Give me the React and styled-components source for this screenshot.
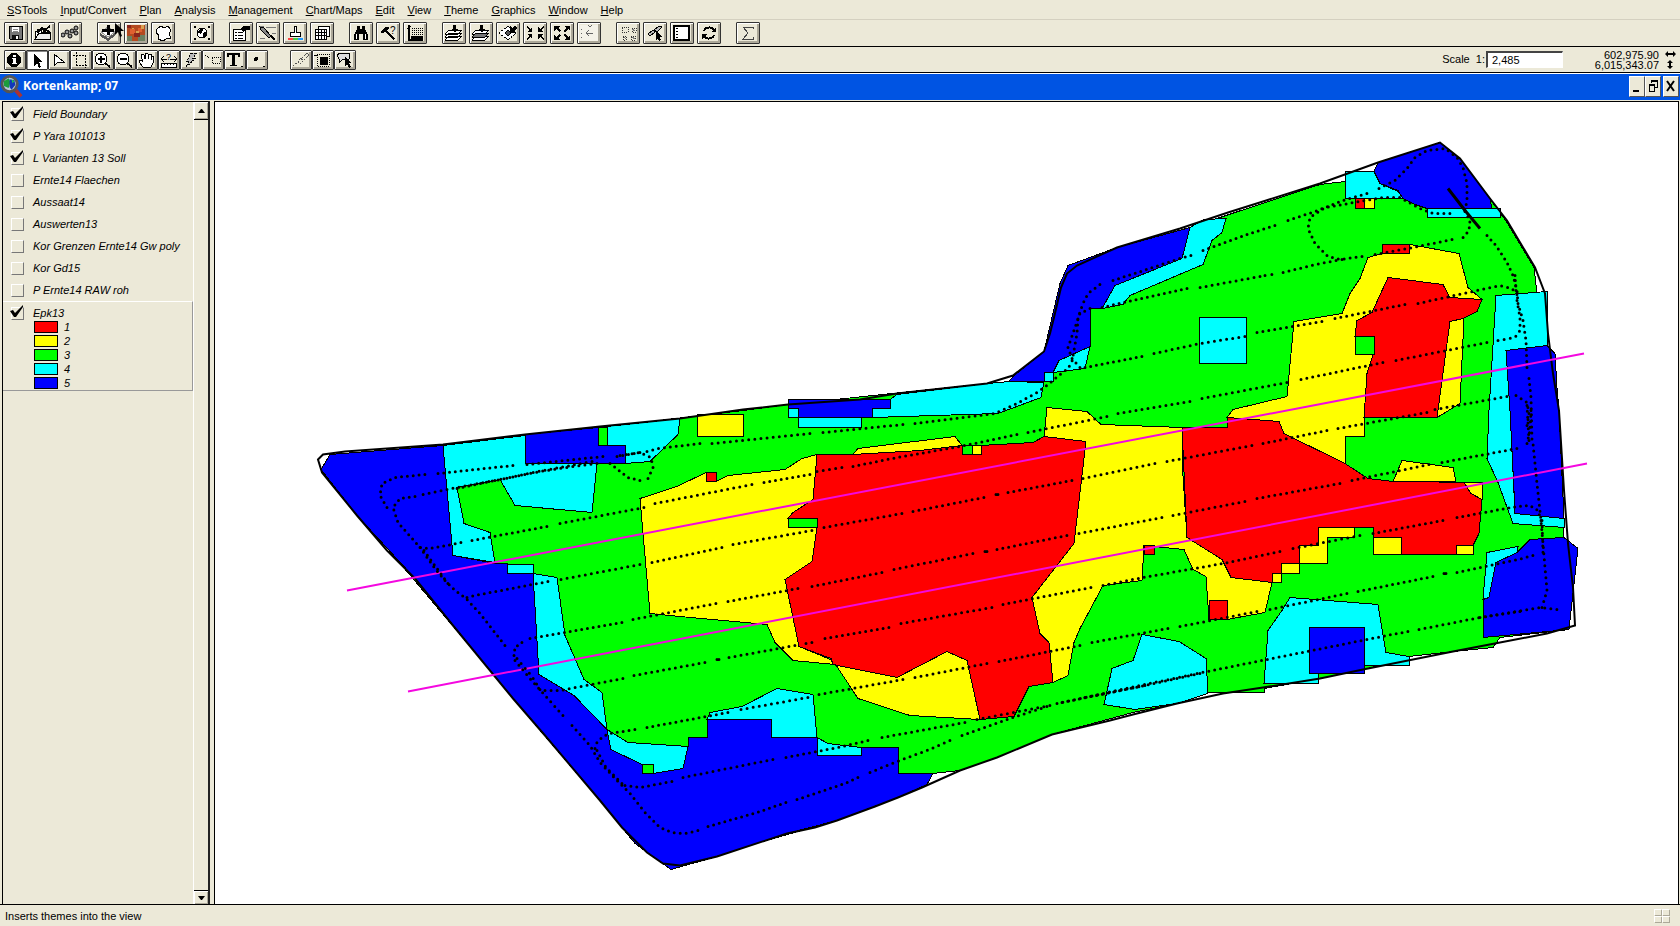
import { useState } from 'react'
import styled, { createGlobalStyle } from 'styled-components'

const colors = {
  face: '#ece9d8',
  shadow: '#aca899',
  title: '#0054e3',
  red: '#ff0000',
  yellow: '#ffff00',
  green: '#00ff00',
  cyan: '#00ffff',
  blue: '#0000ff',
}

const menus = [
  'SSTools',
  'Input/Convert',
  'Plan',
  'Analysis',
  'Management',
  'Chart/Maps',
  'Edit',
  'View',
  'Theme',
  'Graphics',
  'Window',
  'Help',
]

const arrowPath = 'M0 0v12l3-3 2 5 2-1-2-5h4z'

const icons = {
  save: (
    <>
      <path d="M2 1h13v13H3l-1-1z" fill="#777" stroke="#000" />
      <path d="M5 2h7v5H5z" fill="#fff" />
      <path d="M6 4h5M6 6h5" stroke="#888" />
      <path d="M5 10h7v4H5z" fill="#111" />
      <path d="M9 11h2v3H9z" fill="#fff" />
    </>
  ),
  openProject: (
    <>
      <path d="M1 14V6h2l1-2h3v3h9v7z" fill="#fff" stroke="#000" />
      <path d="M1 14l4-6h12l-1 6z" fill="#eee" stroke="#000" />
      <path d="M3 8l5-5 3 2 5-4M9 7l3-2 4 2" fill="none" stroke="#000" strokeWidth="2" />
    </>
  ),
  dots: (
    <g fill="#999" stroke="#000" shapeRendering="auto">
      <circle cx="2" cy="10" r="2" />
      <circle cx="6" cy="7" r="2" />
      <circle cx="9" cy="11" r="2" />
      <circle cx="11" cy="6" r="2" />
      <circle cx="15" cy="3" r="2" />
      <circle cx="15" cy="8" r="2" />
    </g>
  ),
  addTheme: (
    <>
      <path d="M0 8l8 5 7-5v3l-7 5-8-5z" fill="#555" />
      <path d="M1 7l7-5 7 5-7 5z" fill="#fff" stroke="#999" />
      <path d="M2 5h12M8 0v10" stroke="#000" strokeWidth="3" />
    </>
  ),
  image: (
    <>
      <path d="M-1 -1h20v17H-1z" fill="#b44a20" />
      <path d="M-1 11h6v5h-6zM11 10h8v6h-8z" fill="#6b8060" />
      <path d="M3 4h5v5H3zM11 3h4v4h-4z" fill="#df6030" />
      <path d="M7 8h6v4H7zM0 0h4v3H0z" fill="#8a251c" />
      <path d="M14 0h3v4h-3zM5 3h2v1H5zM9 6h3v2H9z" fill="#d9a050" />
    </>
  ),
  shape: <path d="M3 4l4-3 3 2 4-2 3 4-2 4 2 4-5 1-3 2-5-2 1-4-3-2z" fill="#fff" stroke="#000" />,
  globe: (
    <>
      <circle cx="9" cy="8" r="5" fill="#fff" stroke="#000" />
      <path d="M5 6l3-3 2 2-2 4-3-1zM10 8l4-2-1 5-3 1z" />
      <path d="M1 1h2v2H1zM15 1h2v2h-2zM1 13h2v2H1zM15 13h2v2h-2z" />
    </>
  ),
  properties: (
    <>
      <path d="M1 4h12v11H1z" fill="#fff" stroke="#000" />
      <path d="M3 7h2M6 7h5M3 10h2M6 10h5M3 13h2M6 13h5" stroke="#000" />
      <path d="M8 4l3-3h7v4h-5l-2 2z" />
    </>
  ),
  legend: (
    <>
      <path d="M1 1h4M7 2h10M13 8h4M1 13h5" stroke="#777" />
      <path d="M1 2l4 1 7 8-2 2-8-8z" fill="#888" stroke="#000" />
      <path d="M10 11l5 4 1-1-4-4z" />
    </>
  ),
  paint: (
    <>
      <path d="M8 1h2v6h4v4H4V7h4z" fill="#fff" stroke="#000" />
      <path d="M2 13h5v2H2z" fill="#f44" />
      <path d="M7 13h5v2H7z" fill="#4c4" />
      <path d="M12 13h5v2h-5z" fill="#29f" />
    </>
  ),
  table: (
    <>
      <path d="M5 1h11v10H5z" fill="#fff" stroke="#000" />
      <path d="M2 4h11v10H2z" fill="#fff" stroke="#000" />
      <path d="M2 7h11M2 10h11M5 4v10M8 4v10M11 4v10" stroke="#000" />
    </>
  ),
  find: (
    <>
      <path d="M5 1h3v3h2V1h3v3l3 6v5h-5V9H7v6H2v-5l3-6z" />
      <path d="M4 9h1v5H4zM13 9h1v5h-1z" fill="#fff" />
    </>
  ),
  query: (
    <>
      <path d="M1 7l5-5h4v2L8 5l8 9-2 1-8-8-3 1z" />
      <text x="11" y="9" fontSize="10" fontFamily="Liberation Sans, sans-serif">?</text>
    </>
  ),
  locate: (
    <>
      <path d="M3 0v15h14" fill="none" stroke="#000" strokeWidth="2" />
      <path d="M1 3h4M6 3h11M6 5h11M6 7h11M6 9h11" stroke="#000" strokeDasharray="1 1" />
      <path d="M5 11h12v3H5zM1 2l2-2 3 2z" />
    </>
  ),
  layers: (
    <>
      <path d="M0 15l4-4h13l-4 4zM0 12l4-4h13l-4 4zM0 9l4-4h13l-4 4z" fill="#fff" stroke="#000" />
      <path d="M8 0h3v4h2l-3 4-4-4h2z" />
    </>
  ),
  layersDark: (
    <>
      <path d="M0 15l4-4h13l-4 4zM0 9l4-4h13l-4 4z" fill="#fff" stroke="#000" />
      <path d="M0 12l4-4h13l-4 4z" fill="#777" stroke="#000" />
      <path d="M8 0h3v4h2l-3 4-4-4h2z" />
    </>
  ),
  selected: (
    <>
      <path d="M0 8l9-7 8 7-8 7z" fill="#fff" stroke="#000" strokeDasharray="2 1" />
      <path d="M6 8l3-3 3 3-3 3z" fill="#555" stroke="#000" />
      <path d="M16 0l-3 3-2-2v7h6l-2-2 3-3z" />
    </>
  ),
  zoomIn: (
    <path d="M1 1l3 3 2-2v5H1l2-2-3-3zM17 1l-3 3-2-2v5h5l-2-2 3-3zM1 15l3-3 2 2V9H1l2 2-3 3zM17 15l-3-3-2 2V9h5l-2 2 3 3z" />
  ),
  zoomOut: (
    <path d="M1 1h6L5 3l3 3-2 1-3-3-2 2zM17 1h-6l2 2-3 3 2 1 3-3 2 2zM1 15h6l-2-2 3-3-2-1-3 3-2-2zM17 15h-6l2-2-3-3 2-1 3 3 2-2z" />
  ),
  previous: (
    <>
      <path d="M0 0h18v16H0z" fill="#f4f2e8" />
      <path d="M8 0l2 2 2-2M1 4v1M1 8v1M1 12v1M6 8h7M9 5L6 8l3 3" fill="none" stroke="#666" />
    </>
  ),
  selectDots: (
    <>
      <path d="M3 2h6v5H3zM13 3h4v4h-4zM4 11h3v4H4zM12 11h4v4h-4z" fill="none" stroke="#333" strokeDasharray="1 1" />
      <path d="M13 4l3 2M5 12l2 2M13 12l3 2" stroke="#777" />
    </>
  ),
  link: (
    <>
      <path d="M2 9l5-4 2 2-5 4zM8 5l5-4 3 1-5 5z" fill="#bbb" stroke="#000" />
      <path d="M10 6v9l2-2 1 3 2-1-1-3h3z" />
    </>
  ),
  layout: (
    <>
      <path d="M1 1h15v14H1z" fill="#fff" stroke="#000" strokeWidth="2" />
      <path d="M4 3v11" stroke="#000" strokeDasharray="1 2" strokeWidth="2" />
      <path d="M6 2h9v12H6z" fill="#fff" />
    </>
  ),
  refresh: (
    <>
      <path d="M4 6c1-4 8-5 10-1M14 10c-1 4-8 5-10 1" fill="none" stroke="#000" strokeWidth="2" />
      <path d="M16 2v5h-5zM2 14V9h5z" />
    </>
  ),
  sum: <path d="M14 4V2H4l5 6-5 6h10v-2" fill="none" stroke="#444" />,
  identify: (
    <>
      <circle cx="8" cy="8" r="7" />
      <path d="M7 3h3v2H7zM6 6h4v5h1v1H6v-1h1V7H6z" fill="#fff" />
    </>
  ),
  pointer: <path d={arrowPath} transform="translate(6 2)" />,
  vertex: <path d="M4 2v12l4-4h6z" fill="#fff" stroke="#000" />,
  crop: <path d="M4 0v13M1 3h12v10M4 13h12M13 3v13" fill="none" stroke="#000" strokeDasharray="2 1" />,
  magnifyPlus: (
    <>
      <circle cx="7" cy="7" r="6" fill="#fff" stroke="#000" />
      <path d="M4 7h7M7 4v7M11 11l5 4" stroke="#000" strokeWidth="2" />
    </>
  ),
  magnifyMinus: (
    <>
      <circle cx="7" cy="7" r="6" fill="#fff" stroke="#000" />
      <path d="M4 7h7M11 11l5 4" stroke="#000" strokeWidth="2" />
    </>
  ),
  pan: (
    <path d="M5 15l-4-5V8h2l2 2-2-6 1-2 2 1 1 4V2l1-1 2 1v5l1-5 2 0v6l1-4h2l-1 7-2 4z" fill="#fff" stroke="#000" />
  ),
  measure: (
    <>
      <path d="M1 11h15v4H1z" fill="#fff" stroke="#000" />
      <path d="M4 11v2M7 11v2M10 11v2M13 11v2" stroke="#000" />
      <path d="M1 7h6M10 7h7M4 4L1 7l3 3M14 4l3 3-3 3" fill="none" stroke="#000" />
      <text x="6" y="8" fontSize="9" fontFamily="Liberation Sans, sans-serif">?</text>
    </>
  ),
  bolt: <path d="M9 1h6l-4 5h3L4 15l3-6H5z" fill="#bbb" stroke="#000" strokeDasharray="2 1" />,
  label: <path d="M1 3l5 3M8 5h8v6H8z" fill="none" stroke="#000" strokeDasharray="1 1" />,
  text: (
    <>
      <path d="M1 1h13v4h-2V3H9v10h2v1H4v-1h2V3H3v2H1z" />
      <path d="M15 14h2v1h-2z" />
    </>
  ),
  point: (
    <>
      <circle cx="8" cy="7" r="2" />
      <path d="M15 14h2v1h-2z" />
    </>
  ),
  brush: <path d="M1 14l4-3M6 9l2 3 3-3-2-3zM10 6l5-5 2 2-5 5" fill="none" stroke="#555" strokeDasharray="2 1" />,
  selectBox: (
    <>
      <path d="M3 2h12v12H3z" fill="none" stroke="#000" strokeDasharray="1 1" />
      <path d="M6 5h8v8H6z" />
      <path d="M0 3h3v1H0z" />
    </>
  ),
  selectShape: (
    <>
      <path d="M1 3l3-2h10l-1 6H7l-4 4V7z" fill="#ddd" stroke="#000" />
      <path d="M9 5v9l2-2 2 4 2-1-2-4h3z" />
    </>
  ),
}

const mainTools = [
  [['Save project', 'save'], ['Open project', 'openProject'], ['Points', 'dots']],
  [['Add theme', 'addTheme'], ['Image', 'image'], ['Shape', 'shape']],
  [['Projection', 'globe']],
  [['Theme properties', 'properties'], ['Edit legend', 'legend'], ['Paint', 'paint'], ['Open table', 'table']],
  [['Find', 'find'], ['Query builder', 'query'], ['Locate', 'locate']],
  [
    ['Zoom to full extent', 'layers'],
    ['Zoom to active themes', 'layersDark'],
    ['Zoom to selected', 'selected'],
    ['Zoom in', 'zoomIn'],
    ['Zoom out', 'zoomOut'],
    ['Zoom to previous', 'previous'],
  ],
  [['Clear selection', 'selectDots'], ['Select by link', 'link'], ['Layout', 'layout'], ['Refresh', 'refresh']],
  [['Summarize', 'sum']],
]

const drawTools = [
  [
    ['Identify', 'identify'],
    ['Pointer', 'pointer'],
    ['Vertex edit', 'vertex'],
    ['Select feature', 'crop'],
    ['Magnify', 'magnifyPlus'],
    ['Reduce', 'magnifyMinus'],
    ['Pan', 'pan'],
    ['Measure', 'measure'],
    ['Hot link', 'bolt'],
    ['Label', 'label'],
    ['Text', 'text'],
    ['Draw point', 'point'],
  ],
  [['Brush', 'brush'], ['Select by box', 'selectBox'], ['Select by shape', 'selectShape']],
]

const themes = [
  ['Field Boundary', true],
  ['P Yara 101013', true],
  ['L Varianten 13 Soll', true],
  ['Ernte14 Flaechen', false],
  ['Aussaat14', false],
  ['Auswerten13', false],
  ['Kor Grenzen Ernte14 Gw poly', false],
  ['Kor Gd15', false],
  ['P Ernte14 RAW roh', false],
]

const classes = [colors.red, colors.yellow, colors.green, colors.cyan, colors.blue]

const boundary =
  'M318 459 323 454 345 451 443 444 525 434 600 426 680 418 743 409 788 404 860 399 897 393 987 383 1013 375 1044 351 1050 333 1054 317 1061 287 1067 273 1077 265 1117 247 1180 228 1228 212 1263 201 1320 183 1378 162 1440 142 1460 158 1490 198 1507 220 1535 267 1545 293 1548 333 1553 373 1559 410 1564 490 1568 543 1573 587 1575 625 1547 633 1500 642 1453 651 1363 669 1320 678 1263 687 1223 693 1177 703 1133 714 1110 720 1052 734 997 757 960 770 922 787 898 797 875 806 837 820 815 827 787 833 717 856 680 865 663 863 647 852 622 827 600 800 545 735 513 698 453 625 415 578 400 563 387 550 357 515 322 472z'

const zones = [
  [
    'green',
    'M330 454 443 445 600 427 743 410 788 404 987 383 1010 381 1044 351 1068 265 1117 247 1190 227 1229 214 1320 184 1345 181 1345 171 1374 171 1378 162 1440 142 1460 158 1500 212 1507 222 1534 267 1537 293 1547 345 1564 537 1569 629 1500 637 1493 647 1453 651 1409 656 1364 669 1320 678 1264 688 1264 692 1208 692 1177 703 1133 712 1052 734 997 757 960 770 933 773 927 784 837 820 671 867 600 800 321 469z',
  ],
  // zone 5
  [
    'blue',
    'M330 454 443 445 447 485 453 555 495 563 507 563 507 573 533 573 539 674 574 695 607 729 611 749 642 764 642 773 653 773 683 768 688 746 688 737 707 737 707 719 771 719 771 737 817 737 817 755 861 755 861 747 898 747 898 773 933 773 927 784 898 797 837 820 787 833 717 856 671 869 635 843 600 800 513 698 415 578 357 515 321 469z',
  ],
  ['blue', 'M525 434 598 427 598 445 625 445 625 463 525 463z'],
  ['blue', 'M788 399 890 399 890 408 872 408 872 417 798 417 798 408 788 408z'],
  [
    'blue',
    'M1009 381 1044 381 1044 372 1053 372 1059 360 1090 346 1090 308 1102 308 1115 285 1182 258 1190 227 1117 247 1068 265 1060 283 1044 351 1013 376z',
  ],
  ['blue', 'M1374 171 1378 162 1440 142 1460 158 1490 198 1492 208 1427 208 1415 204 1403 198 1398 190 1380 183z'],
  // zone 4
  ['cyan', 'M443 445 525 435 525 463 597 463 592 512 515 505 500 479 457 487 464 523 490 532 495 562 453 555z'],
  ['cyan', 'M607 426 680 418 678 434 650 461 625 463 625 445 607 445z'],
  ['cyan', 'M507 564H533V573H507z'],
  ['cyan', 'M533 573 557 577 565 635 584 679 602 692 607 729 574 695 539 674z'],
  ['cyan', 'M607 729 628 742 688 746 683 768 653 773 642 764 611 749z'],
  ['cyan', 'M707 719 710 712 742 706 777 688 813 694 817 737 771 737 771 719z'],
  ['cyan', 'M817 737 828 743 861 747 861 755 817 755z'],
  ['cyan', 'M788 408H798V417H788z'],
  ['cyan', 'M798 417H861V427H798z'],
  ['cyan', 'M890 399 897 394 987 383 1010 381 1044 382 1041 397 998 413 872 417 872 408 890 408z'],
  ['cyan', 'M1044 372H1053V381H1044z'],
  ['cyan', 'M1059 360 1090 346 1085 368 1053 372z'],
  ['cyan', 'M1190 227 1204 219 1226 218 1222 232 1212 240 1203 264 1130 295 1123 304 1102 308 1115 285 1182 258z'],
  ['cyan', 'M1199 317H1246V363H1199z'],
  ['cyan', 'M1345 171 1374 171 1380 183 1398 191 1403 198 1345 198z'],
  ['cyan', 'M1427 208H1500V217H1427z'],
  [
    'cyan',
    'M1496 295 1547 291 1547 345 1506 350 1510 410 1515 513 1564 518 1564 527 1513 523 1498 482 1487 458 1489 410z',
  ],
  ['blue', 'M1506 350 1547 345 1555 353 1557 387 1559 410 1564 518 1515 513 1514 490 1510 410z'],
  ['cyan', 'M1487 552 1518 546 1517 552 1496 562 1489 597 1483 599z'],
  ['blue', 'M1483 599 1489 597 1496 562 1517 552 1530 539 1564 537 1578 548 1569 629 1483 637z'],
  ['cyan', 'M1142 634 1179 641 1206 658 1208 693 1177 703 1135 709 1104 704 1112 668 1133 660z'],
  [
    'cyan',
    'M1290 597 1378 604 1386 652 1409 656 1409 665 1364 665 1318 673 1318 683 1264 683 1268 630 1282 610z',
  ],
  ['blue', 'M1309 627H1364V673H1309z'],
  // zone 2
  [
    'yellow',
    'M640 498 677 486 706 472 716 481 728 475 785 469 802 458 817 454 813 499 793 512 788 518 817 527 812 561 785 579 799 646 833 660 835 664 793 660 775 642 767 624 680 616 650 613z',
  ],
  ['yellow', 'M833 660 858 698 910 715 980 719 967 660 947 651 897 677z'],
  ['yellow', 'M697 414H743V436H697z'],
  ['yellow', 'M853 454 858 448 955 436 962 445 920 450z'],
  [
    'yellow',
    'M1044 436 1047 407 1087 411 1101 424 1182 427 1182 460 1187 537 1222 559 1231 577 1272 582 1265 612 1227 619 1209 619 1206 576 1193 569 1184 549 1144 545 1142 580 1103 585 1080 628 1074 642 1068 675 1053 682 1049 642 1040 633 1032 597 1074 543 1086 441z',
  ],
  [
    'yellow',
    'M1227 417 1233 409 1287 396 1294 321 1342 313 1350 293 1360 278 1368 257 1382 253 1410 244 1459 253 1468 287 1482 299 1464 317 1460 403 1437 417 1364 417 1364 436 1345 436 1345 463 1284 433 1279 421z',
  ],
  ['yellow', 'M1393 481 1402 460 1453 467 1456 481z'],
  // zone 1
  [
    'red',
    'M817 454 853 454 920 450 962 445 962 454 981 454 981 445 1033 442 1044 436 1086 441 1074 543 1032 597 1040 633 1049 642 1053 682 1029 686 1014 716 980 719 967 660 947 651 897 677 833 664 831 658 799 646 785 579 812 561 817 527 788 518 793 512 813 499z',
  ],
  [
    'red',
    'M1388 277 1443 284 1450 297 1482 299 1477 311 1463 318 1450 321 1437 417 1364 417 1367 373 1373 354 1355 336 1357 320 1372 312z',
  ],
  [
    'red',
    'M1182 427 1227 427 1227 417 1279 421 1284 433 1345 463 1368 478 1393 481 1482 482 1482 499 1479 533 1473 545 1473 554 1373 554 1373 527 1318 527 1318 545 1299 545 1299 563 1281 563 1281 573 1272 573 1272 582 1231 577 1222 559 1187 537z',
  ],
  // single cells
  ['red', 'M706 472H716V481H706z'],
  ['red', 'M1144 545H1154V554H1144z'],
  ['red', 'M1209 600H1227V619H1209z'],
  ['red', 'M1355 198H1364V208H1355z'],
  ['red', 'M1382 244H1409V253H1382z'],
  ['yellow', 'M1364 198H1374V208H1364z'],
  ['yellow', 'M972 445H981V454H972z'],
  ['yellow', 'M1464 482H1482V499L1471 493z'],
  ['yellow', 'M1373 537H1401V554H1373z'],
  ['yellow', 'M1456 545H1473V554H1456z'],
  ['yellow', 'M1272 573H1281V582H1272z'],
  ['yellow', 'M1281 563H1299V573H1281z'],
  ['yellow', 'M1299 545H1318V527H1354V537H1327V563H1299z'],
  ['green', 'M598 427H607V445H598z'],
  ['green', 'M642 764H653V773H642z'],
  ['green', 'M788 518H817V527H788z'],
  ['green', 'M962 445H972V454H962z'],
  ['green', 'M1355 336H1374V354H1355z'],
]

// one entry per pass of the machine, a new M where the log has a gap
const tracks = [
  'M387 507 380 495 382 483 395 477 425 474M438 473 513 465M527 464 603 456M617 456 640 452M647 451 658 448 700 443M712 443 810 433M823 432 903 424M915 423 995 413 1015 404 1037 392 1048 384 1060 374 1068 368 1072 361 1077 333 1078 317 1083 303 1088 293 1100 284M1113 280 1183 257 1191 255M1203 250 1247 234 1275 225M1288 220 1315 211 1343 200 1367 193M1379 188 1395 180 1407 168 1415 157 1427 150 1445 148 1457 157 1463 167 1467 183 1467 200 1465 210',
  'M1465 211 1470 220 1469 230 1463 237M1452 239 1413 247 1375 254M1362 256 1340 259 1328 256 1315 243 1308 228 1310 217 1325 207 1360 201 1383 197 1400 197 1420 208 1433 213 1450 213',
  'M1342 259 1320 263 1283 272M1265 275 1272 274M1260 276 1200 287M1187 288 1132 300 1102 307M1090 308 1080 313 1075 327 1068 347 1072 358 1080 367M1085 367 1142 356M1154 353 1200 343 1245 336M1257 332 1322 321M1335 318 1360 313 1405 304M1418 303 1468 292 1500 285 1512 288 1517 294',
  'M597 463 573 466 540 471 500 479 457 487 423 494M415 496 400 498 393 507 398 522 420 547 430 548 447 545 461 542M472 540 547 526M560 523 644 507M655 503 752 484M764 482 810 474M817 471 842 467M853 466 897 457 960 446 1017 434M1028 432 1107 416M1118 413 1190 401M1202 398 1287 382M1301 379 1383 362M1396 360 1487 342M1498 340 1515 337 1520 330 1520 317 1517 300',
  'M610 463 628 477 640 480M648 478 653 467 651 457 640 452 620 455M592 461 533 472 510 477 480 483 457 488',
  'M420 547 435 568 445 580 455 590 466 598 480 613 505 645M515 660 530 678 545 695 563 715M572 725 590 745 600 762 617 780 630 793 645 812 660 827 672 832 685 833 698 830M708 826 757 812 786 802M797 799 845 783 858 777M870 772 897 761 927 750 950 740M962 735 1013 717 1047 706M1057 703 1140 685 1207 671 1267 659 1327 647 1387 635 1408 631M1419 629 1480 617 1540 607 1557 609',
  'M424 550 437 568 448 583M517 658 532 676 540 689M597 750 606 767 622 783M1480 617 1520 611M1085 697 1145 685',
  'M467 597 475 595 548 581M561 579 640 564M652 562 722 547M733 544 812 530M824 527 902 513M913 511 984 497M996 494 998 494M1008 492 1072 480M1083 478 1155 463M1167 461 1252 445M1263 443 1327 430M1338 428 1427 412M1435 409 1507 396M1516 395 1527 402 1529 413 1527 425',
  'M514 655 515 647 522 642M530 638 622 622M633 619 716 603M728 601 798 588M812 586 882 572M894 569 973 553M985 551 987 551M997 549 1067 535M1079 533 1162 517M1173 515 1245 501M1257 498 1340 483M1352 480 1429 464M1442 462 1517 448M1527 443 1530 430 1531 410',
  'M545 690 560 690 623 678M634 675 705 662M717 659 719 659M729 657 795 645M806 643 812 642M825 638 889 627M901 623 992 607M1003 604 1091 587M1103 585 1143 577 1223 563 1280 551M1293 548 1360 535M1373 533 1443 520M1457 517 1517 506 1530 505 1538 510 1541 520',
  'M595 748 597 742 603 736 610 733 635 729M647 727 728 712M741 709 808 697M819 694 903 679M915 677 987 663M999 661 1080 645M1092 642 1168 628M1180 626 1257 611M1270 609 1347 593M1358 591 1433 576M1444 573 1446 573M1457 572 1522 558 1533 555',
  'M625 785 640 787 672 781M683 777 773 759M786 757 838 747 868 740M882 737 965 722M977 719 1050 705M1062 702 1140 686 1200 673',
  'M1487 235 1496 245 1507 262 1513 275 1517 290 1518 303 1523 320 1526 340 1527 367M1529 378 1531 397 1532 440 1533 443 1537 483 1541 520 1543 543 1545 567 1547 590 1542 607',
  'M1527 405 1529 440M1542 520 1543 552M1515 275 1516 290',
]

// cut the passes into runs and find how many 6px steps each run holds
const runs = tracks
  .flatMap((d) => d.slice(1).split('M'))
  .map((run) => {
    const n = run.split(' ').map(Number)
    let length = 0
    for (let i = 2; i < n.length; i += 2) {
      length += Math.hypot(n[i] - n[i - 2], n[i + 1] - n[i - 1])
    }
    return { d: `M${run}`, steps: Math.max(1, Math.round(length / 6)) }
  })

const FieldMap = () => (
  <MapSvg viewBox="215 102 1463 801" role="img" aria-label="Kortenkamp field zones">
    <g stroke="#000" strokeWidth="1" shapeRendering="crispEdges">
      {zones.map(([zone, d]) => (
        <path key={d} d={d} fill={colors[zone]} />
      ))}
    </g>
    <path d={boundary} fill="none" stroke="#000" strokeWidth="2" />
    <path d="M347 590 1584 353M408 691 1587 463" fill="none" stroke="#f408e0" strokeWidth="2" />
    <g fill="none" stroke="#000" strokeWidth="3" strokeLinecap="round" strokeDasharray="0 1">
      {runs.map(({ d, steps }) => (
        <path key={d} d={d} pathLength={steps + 0.02} />
      ))}
    </g>
    <path d="M1448 188 1465 210 1480 228" fill="none" stroke="#000" strokeWidth="3" />
  </MapSvg>
)

const ToolGroups = ({ groups, small }) =>
  groups.map((group) => (
    <ToolGroup key={group[0][0]} $small={small}>
      {group.map(([label, icon]) => (
        <ToolButton key={label} type="button" aria-label={label} $small={small} $pressed={icon === 'pointer'}>
          <svg width="18" height="16" viewBox="0 0 18 16" shapeRendering="crispEdges">
            {icons[icon]}
          </svg>
          {icon === 'addTheme' && (
            <MouseCursor width="10" height="15" viewBox="0 0 10 15">
              <path d={arrowPath} />
            </MouseCursor>
          )}
        </ToolButton>
      ))}
    </ToolGroup>
  ))

const ThemeRow = ({ name, on }) => {
  const [checked, setChecked] = useState(on)
  return (
    <ThemeLabel>
      <CheckWrap>
        <input type="checkbox" checked={checked} onChange={() => setChecked(!checked)} />
        {checked && (
          <svg width="14" height="13" viewBox="0 0 14 13">
            <path d="M0 6l3-1 2 3 8-8v2L6 12H4z" />
          </svg>
        )}
      </CheckWrap>
      {name}
    </ThemeLabel>
  )
}

export default function App() {
  return (
    <Window>
      <GlobalStyle />
      <MenuBar>
        {menus.map((menu) => (
          <button type="button" key={menu}>
            <u>{menu[0]}</u>
            {menu.slice(1)}
          </button>
        ))}
      </MenuBar>
      <Toolbar>
        <ToolGroups groups={mainTools} />
      </Toolbar>
      <Toolbar $small>
        <ToolGroups groups={drawTools} small />
        <Scale>
          <label htmlFor="scale">Scale&nbsp; 1:</label>
          <input id="scale" type="text" defaultValue="2,485" />
        </Scale>
        <Coordinates>
          <span>602,975.90</span>
          <svg width="11" height="9" viewBox="0 0 11 9">
            <path d="M0 4l3-3v2h5V1l3 3-3 3V5H3v2z" />
          </svg>
          <span>6,015,343.07</span>
          <svg width="11" height="9" viewBox="0 0 11 9">
            <path d="M5 0l3 3H6v3h2L5 9 2 6h2V3H2z" />
          </svg>
        </Coordinates>
      </Toolbar>
      <TitleBar>
        <svg width="23" height="24" viewBox="0 0 24 24">
          <path d="M16 16l6 7" stroke="#a33" strokeWidth="4" />
          <circle cx="10" cy="10" r="8" fill="#b8c8d8" stroke="#555" strokeWidth="3" />
          <path d="M4 7l5-3 2 4-2 6-5-2z" fill="#1c9c3c" />
          <path d="M10 5l5 1 1 5-4 5-2-3z" fill="#1238b8" />
          <path d="M12 5l3 2-2 2z" fill="#1ec850" />
        </svg>
        <h1>Kortenkamp; 07</h1>
        <WindowButton type="button" aria-label="Minimize">
          <svg width="14" height="16" viewBox="0 0 14 16">
            <path d="M3 12h6v2H3z" />
          </svg>
        </WindowButton>
        <WindowButton type="button" aria-label="Restore">
          <svg width="14" height="16" viewBox="0 0 14 16" shapeRendering="crispEdges">
            <path d="M5 5V2h6v7H8M3 6h5v7H3zM5 3h6M3 7h5" fill="none" stroke="#000" />
          </svg>
        </WindowButton>
        <WindowButton type="button" aria-label="Close" $apart>
          <svg width="14" height="16" viewBox="0 0 14 16">
            <path d="M3 3l7 10M10 3L3 13" stroke="#000" strokeWidth="2" />
          </svg>
        </WindowButton>
      </TitleBar>
      <Workspace>
        <Contents>
          <ThemeList>
            {themes.map(([name, on]) => (
              <ThemeRow key={name} name={name} on={on} />
            ))}
            <ActiveTheme>
              <ThemeRow name="Epk13" on />
              <Legend>
                {classes.map((color, i) => (
                  <li key={color}>
                    <Swatch $color={color} />
                    {i + 1}
                  </li>
                ))}
              </Legend>
            </ActiveTheme>
          </ThemeList>
          <ScrollBar>
            <ScrollButton type="button" aria-label="Scroll up">
              <svg width="7" height="4" viewBox="0 0 7 4">
                <path d="M0 4l3-4h1l3 4z" />
              </svg>
            </ScrollButton>
            <ScrollButton type="button" aria-label="Scroll down" $down>
              <svg width="7" height="4" viewBox="0 0 7 4">
                <path d="M0 0h7L4 4H3z" />
              </svg>
            </ScrollButton>
          </ScrollBar>
        </Contents>
        <MapPane>
          <FieldMap />
        </MapPane>
      </Workspace>
      <StatusBar>
        Inserts themes into the view
        <Grip>
          <i />
          <i />
          <i />
          <i />
        </Grip>
      </StatusBar>
    </Window>
  )
}

const GlobalStyle = createGlobalStyle`
  * {
    box-sizing: border-box;
  }

  body {
    margin: 0;
    background: ${colors.face};
    color: #000;
    font: 11px/13px 'Liberation Sans', sans-serif;
  }

  button,
  input {
    font: inherit;
    color: inherit;
  }

  svg {
    display: block;
    flex: none;
  }
`

const Window = styled.div`
  height: 100vh;
  display: flex;
  flex-direction: column;
  overflow: hidden;
`

const MenuBar = styled.nav`
  display: flex;
  height: 20px;
  padding-left: 1px;
  border-bottom: 1px solid #d4d0c0;

  button {
    background: none;
    border: none;
    padding: 2px 7px 0 6px;
    white-space: nowrap;
  }
`

const Toolbar = styled.div`
  display: flex;
  align-items: center;
  gap: ${({ $small }) => ($small ? '22px' : '15px')};
  height: ${({ $small }) => ($small ? '26px' : '27px')};
  padding: 0 4px;
  border-bottom: 1px solid #000;
`

const ToolGroup = styled.div`
  display: flex;
  gap: ${({ $small }) => ($small ? '0' : '3px')};
`

const ToolButton = styled.button`
  position: relative;
  display: grid;
  place-content: center;
  width: ${({ $small }) => ($small ? '22px' : '24px')};
  height: ${({ $small }) => ($small ? '20px' : '22px')};
  padding: 0;
  border: 1px solid #333;
  border-radius: 1px;
  background: ${({ $pressed }) => ($pressed ? '#fff' : colors.face)};
  box-shadow: ${({ $pressed }) =>
    $pressed ? 'inset 1px 1px #888' : `inset 1px 1px #fff, inset -2px -2px ${colors.shadow}`};
`

const MouseCursor = styled.svg`
  position: absolute;
  left: 17px;
  top: 0;
  z-index: 1;
`

const Scale = styled.div`
  display: flex;
  align-items: center;
  gap: 1px;
  margin-left: auto;

  input {
    width: 77px;
    height: 17px;
    padding: 0 4px;
    border: 1px solid #fff;
    border-top: 2px solid #444;
    border-left: 2px solid #444;
    background: #fff;
  }
`

const Coordinates = styled.div`
  display: grid;
  grid-template-columns: 74px 11px;
  align-items: center;
  column-gap: 6px;
  text-align: right;
  line-height: 10px;
`

const TitleBar = styled.header`
  display: flex;
  align-items: center;
  height: 27px;
  padding: 0 1px 2px 0;
  background: ${colors.title};
  border-top: 1px solid #fff;
  color: #fff;

  h1 {
    flex: 1;
    margin: 0;
    font: bold 12px/18px 'Noto Sans', sans-serif;
  }
`

const WindowButton = styled.button`
  display: grid;
  place-content: center;
  width: 16px;
  height: 21px;
  margin-left: ${({ $apart }) => ($apart ? '2px' : '0')};
  padding: 0;
  border: 1px solid #fff;
  border-right-color: #555;
  border-bottom-color: #555;
  background: ${colors.face};
`

const Workspace = styled.main`
  flex: 1;
  min-height: 0;
  display: flex;
  gap: 4px;
  padding: 1px 1px 0 2px;
`

const Contents = styled.aside`
  display: flex;
  width: 208px;
  border: 1px solid #000;
  border-right: 2px solid #222;
  border-bottom: none;
`

const ThemeList = styled.div`
  flex: 1;
  padding-top: 1px;
  font-style: italic;
`

const ThemeLabel = styled.label`
  display: flex;
  align-items: center;
  gap: 9px;
  height: 22px;
  padding-left: 8px;
  white-space: nowrap;
`

const CheckWrap = styled.span`
  position: relative;

  input {
    display: block;
    appearance: none;
    width: 13px;
    height: 13px;
    margin: 0;
    border: 1px solid #fff;
    border-right-color: #777;
    border-bottom-color: #777;
  }

  svg {
    position: absolute;
    left: -1px;
    top: -2px;
  }
`

const ActiveTheme = styled.section`
  border-top: 1px solid #fff;
  border-right: 1px solid #999;
  border-bottom: 1px solid #999;
`

const Legend = styled.ul`
  margin: -4px 0 0;
  padding: 0 0 0 31px;
  list-style: none;

  li {
    display: flex;
    align-items: center;
    gap: 6px;
    height: 14px;
  }
`

const Swatch = styled.span`
  width: 24px;
  height: 12px;
  border: 1px solid #000;
  background: ${({ $color }) => $color};
`

const ScrollBar = styled.div`
  display: flex;
  flex-direction: column;
  justify-content: space-between;
  width: 15px;
  border-left: 1px solid #fff;
`

const ScrollButton = styled.button`
  display: grid;
  place-content: center;
  height: ${({ $down }) => ($down ? '14px' : '18px')};
  padding: 0;
  border: none;
  border-bottom: ${({ $down }) => ($down ? 'none' : '1px solid #000')};
  border-top: ${({ $down }) => ($down ? '1px solid #000' : 'none')};
  background: ${colors.face};
  box-shadow: inset 1px 1px #fff, inset -1px -1px ${colors.shadow};
`

const MapPane = styled.section`
  flex: 1;
  min-width: 0;
  border: 1px solid #000;
  border-bottom: none;
  background: #fff;
`

const MapSvg = styled.svg`
  width: 100%;
  height: 100%;
`

const StatusBar = styled.footer`
  display: flex;
  justify-content: space-between;
  align-items: center;
  height: 22px;
  padding: 1px 10px 0 5px;
  border-top: 1px solid #000;
`

const Grip = styled.span`
  display: grid;
  grid-template-columns: 7px 7px;
  gap: 1px;

  i {
    height: 6px;
    border-right: 1px solid ${colors.shadow};
    border-bottom: 1px solid ${colors.shadow};
    box-shadow: -1px -1px #fff;
  }
`
